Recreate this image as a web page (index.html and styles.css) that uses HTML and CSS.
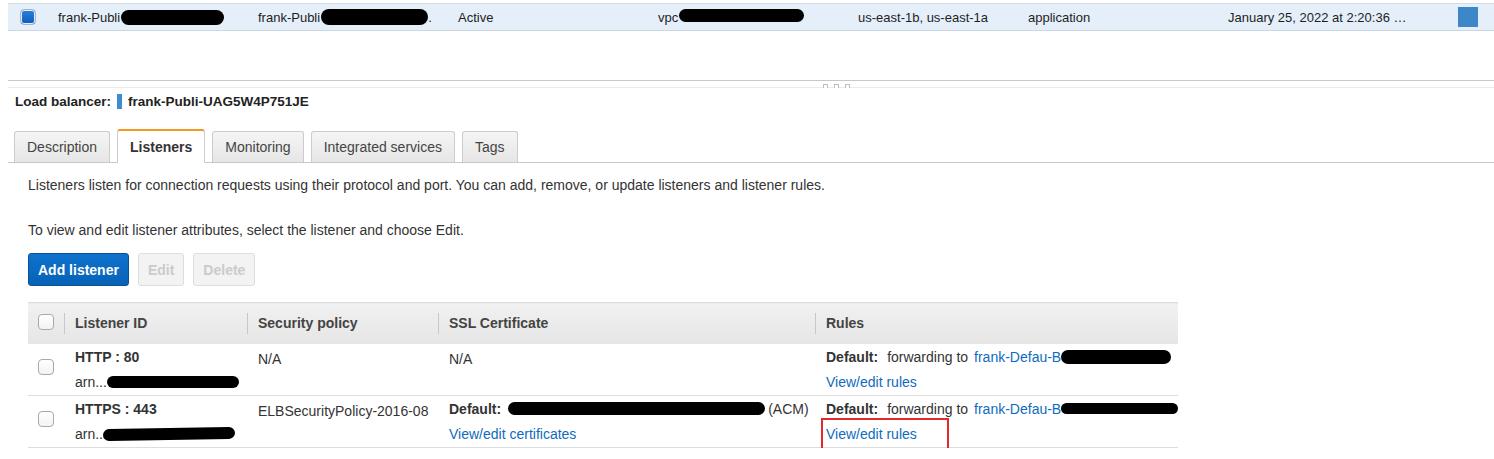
FILE: index.html
```html
<!DOCTYPE html>
<html>
<head>
<meta charset="utf-8">
<link rel="stylesheet" href="styles.css">
</head>
<body>
<div class="top-row">
  <div class="cell cb-cell"><span class="cb cb-on"></span></div>
  <div class="cell">frank-Publi<span class="redact r-top1"></span></div>
  <div class="cell">frank-Publi<span class="redact r-top2"></span>.</div>
  <div class="cell">Active</div>
  <div class="cell">vpc<span class="redact r-vpc"></span></div>
  <div class="cell">us-east-1b, us-east-1a</div>
  <div class="cell">application</div>
  <div class="cell">January 25, 2022 at 2:20:36 …</div>
  <div class="cell"><span class="sq"></span></div>
</div>

<div class="splitter">
  <div class="grip"><span></span><span></span><span></span></div>
</div>

<div class="panel">
  <div class="lb-title"><b>Load balancer:</b><span class="bar"></span><b>frank-Publi-UAG5W4P751JE</b></div>

  <div class="tabs">
    <div class="tab">Description</div>
    <div class="tab active">Listeners</div>
    <div class="tab">Monitoring</div>
    <div class="tab">Integrated services</div>
    <div class="tab">Tags</div>
  </div>

  <div class="tab-body">
    <p class="intro">Listeners listen for connection requests using their protocol and port. You can add, remove, or update listeners and listener rules.</p>
    <p class="hint">To view and edit listener attributes, select the listener and choose Edit.</p>
    <div class="actions">
      <button class="btn primary">Add listener</button>
      <button class="btn disabled">Edit</button>
      <button class="btn disabled">Delete</button>
    </div>

    <table class="listeners">
      <colgroup>
        <col class="w-cb">
        <col class="w-id">
        <col class="w-pol">
        <col class="w-ssl">
        <col class="w-rules">
      </colgroup>
      <thead>
        <tr>
          <th class="c-cb"><span class="cb"></span></th>
          <th class="sep">Listener ID</th>
          <th class="sep">Security policy</th>
          <th class="sep">SSL Certificate</th>
          <th class="sep">Rules</th>
        </tr>
      </thead>
      <tbody>
        <tr>
          <td class="c-cb"><span class="cb"></span></td>
          <td>
            <div class="line"><b>HTTP : 80</b></div>
            <div class="line">arn...<span class="redact r-arn1"></span></div>
          </td>
          <td><div class="line low">N/A</div></td>
          <td><div class="line low">N/A</div></td>
          <td>
            <div class="line"><b>Default:</b><span class="fw">forwarding to</span><a class="link">frank-Defau-B</a><span class="redact r-tg1"></span></div>
            <div class="line"><a class="link">View/edit rules</a></div>
          </td>
        </tr>
        <tr>
          <td class="c-cb"><span class="cb"></span></td>
          <td>
            <div class="line"><b>HTTPS : 443</b></div>
            <div class="line">arn..<span class="redact r-arn2"></span></div>
          </td>
          <td><div class="line low">ELBSecurityPolicy-2016-08</div></td>
          <td>
            <div class="line"><b>Default:</b><span class="redact r-cert"></span>(ACM)</div>
            <div class="line"><a class="link">View/edit certificates</a></div>
          </td>
          <td>
            <div class="line"><b>Default:</b><span class="fw">forwarding to</span><a class="link">frank-Defau-B</a><span class="redact r-tg2"></span></div>
            <div class="line"><a class="link highlighted">View/edit rules</a></div>
          </td>
        </tr>
      </tbody>
    </table>
  </div>
</div>
</body>
</html>
```

FILE: styles.css
```css
* { box-sizing: border-box; }

body {
  margin: 0;
  background: #fff;
  font-family: "Liberation Sans", Arial, Helvetica, sans-serif;
  font-size: 14px;
  color: #333;
}

/* ---------- selected list row ---------- */
.top-row {
  margin: 3px 0 0 8px;
  height: 28px;
  display: grid;
  grid-template-columns: 50px 200px 200px 200px 200px 170px 200px 230px 1fr;
  align-items: center;
  background: #e4effa;
  border-top: 1px solid #d5dce4;
  border-bottom: 1px solid #cdd7e2;
  font-size: 13px;
  color: #1e1e1e;
}
.cell {
  white-space: nowrap;
  display: flex;
  align-items: center;
}
.cb-cell { padding-left: 12px; }

.cb {
  display: inline-block;
  width: 16px;
  height: 16px;
  border: 1px solid #a9a9a9;
  border-radius: 4px;
  background: linear-gradient(#ffffff, #f3f3f3);
}
.cb-on {
  border-color: #a6b3c2;
  background: linear-gradient(#2c7fdc, #0a5ec2);
  box-shadow: inset 0 0 0 1px #e9eef4;
}
.sq {
  display: inline-block;
  width: 20px;
  height: 20px;
  background: #3d86c8;
}

.redact {
  display: inline-block;
  background: #000;
  border-radius: 999px;
}
.r-top1 { width: 103px; height: 15px; margin-left: 1px; }
.r-top2 { width: 107px; height: 16px; margin-left: 1px; }
.r-vpc  { width: 125px; height: 13px; margin-left: 1px; transform: translateY(-2px); }
.r-arn1 { width: 132px; height: 12px; }
.r-arn2 { width: 132px; height: 12px; transform: rotate(-1deg); }
.r-cert { width: 257px; height: 13px; margin: 0 3px 0 7px; }
.r-tg1  { width: 110px; height: 14px; }
.r-tg2  { width: 125px; height: 11px; }

/* ---------- splitter ---------- */
.splitter {
  margin: 49px 0 0 8px;
  height: 8px;
  border-top: 1px solid #c8c8c8;
  border-bottom: 1px solid #ebebeb;
  display: flex;
  justify-content: center;
  align-items: flex-end;
  padding-left: 170px;
}
.grip {
  display: flex;
  gap: 6px;
  margin-bottom: -1px;
}
.grip span {
  width: 5px;
  height: 4px;
  border: 1px solid #bdbdbd;
  border-bottom: none;
  border-radius: 1px 1px 0 0;
  background: #fff;
}

/* ---------- detail panel ---------- */
.panel { margin-left: 8px; }

.lb-title {
  margin-top: 4px;
  padding-left: 7px;
  height: 18px;
  display: flex;
  align-items: center;
  font-size: 13.5px;
  color: #222;
}
.lb-title .bar {
  display: inline-block;
  width: 5px;
  height: 15px;
  background: #3d8bd0;
  margin: 0 6px 0 6px;
}

.tabs {
  margin-top: 19px;
  padding-left: 6px;
  height: 34px;
  display: flex;
  align-items: flex-end;
  gap: 7px;
  border-bottom: 1px solid #c9c9c9;
}
.tab {
  height: 31px;
  padding: 0 12px;
  display: flex;
  align-items: center;
  border: 1px solid #cccccc;
  border-bottom: none;
  border-radius: 3px 3px 0 0;
  background: linear-gradient(#f5f5f5, #e6e6e6);
  color: #444;
  font-size: 14px;
}
.tab.active {
  height: 34px;
  margin-bottom: -1px;
  background: #fff;
  border-top: 2px solid #f7961e;
  font-weight: bold;
  color: #333;
  padding-bottom: 1px;
}

.tab-body {
  padding-left: 20px;
  color: #333;
}
.tab-body p {
  margin: 0;
  line-height: 18px;
}
.intro { margin-top: 13px !important; }
.hint { margin-top: 27px !important; }

.actions {
  margin-top: 14px;
  display: flex;
  gap: 9px;
}
.btn {
  height: 33px;
  padding: 0 9px;
  border-radius: 3px;
  font-family: inherit;
  font-size: 14px;
  font-weight: bold;
}
.btn.primary {
  background: linear-gradient(#0f72cc, #0662b7);
  border: 1px solid #0a5296;
  color: #fff;
}
.btn.disabled {
  background: #f3f3f3;
  border: 1px solid #dedede;
  color: #cbcbcb;
}

/* ---------- listeners table ---------- */
.listeners {
  margin-top: 16px;
  width: 1150px;
  border-collapse: collapse;
  table-layout: fixed;
}
.w-cb { width: 36px; }
.w-id { width: 183px; }
.w-pol { width: 191px; }
.w-ssl { width: 377px; }
.w-rules { width: 363px; }

.listeners th {
  height: 41px;
  text-align: left;
  font-weight: bold;
  color: #444;
  padding: 0 0 0 11px;
  border-top: 1px solid #dcdcdc;
  background: linear-gradient(#f1f1f1, #e5e5e5);
}
.listeners th.sep {
  background:
    linear-gradient(#c8c8c8, #c8c8c8) left center / 1px 21px no-repeat,
    linear-gradient(#f1f1f1, #e5e5e5);
}
.listeners th.c-cb { padding: 0 0 0 10px; }
.listeners th.c-cb .cb { vertical-align: -1px; }

.listeners td {
  height: 51px;
  vertical-align: top;
  padding: 4px 0 4px 11px;
  border-bottom: 1px solid #dddddd;
  overflow: visible;
}
.listeners td.c-cb {
  padding: 15px 0 0 10px;
}
.line {
  height: 18px;
  line-height: 18px;
  white-space: nowrap;
  display: flex;
  align-items: center;
}
.line + .line { margin-top: 7px; }
.line.low { margin-top: 2px; }

.listeners b { color: #333; }
.fw { margin: 0 6px 0 9px; }

.link {
  color: #0f6bbd;
  text-decoration: none;
  cursor: pointer;
}
.highlighted {
  position: relative;
}
.highlighted::after {
  content: "";
  position: absolute;
  left: -5px;
  top: -7px;
  width: 124px;
  height: 33px;
  border: 2px solid #e5282b;
}
```
